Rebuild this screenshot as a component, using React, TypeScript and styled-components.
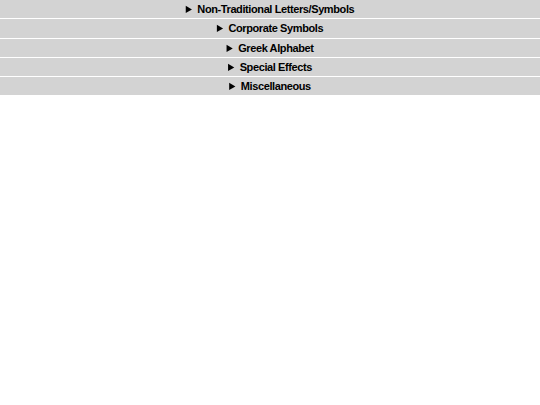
import React from "react";
import styled, { createGlobalStyle } from "styled-components";

const sections = [
  "Non-Traditional Letters/Symbols",
  "Corporate Symbols",
  "Greek Alphabet",
  "Special Effects",
  "Miscellaneous",
];

const GlobalStyle = createGlobalStyle`
  body {
    margin: 0;
    background: #ffffff;
    font-family: "Liberation Sans", Arial, sans-serif;
  }
`;

const Section = styled.details`
  margin-bottom: 1px;
`;

const Summary = styled.summary`
  height: 18.25px;
  line-height: 18px;
  background: #d3d3d3;
  color: #000;
  font-size: 11px;
  font-weight: bold;
  letter-spacing: -0.4px;
  text-align: center;
  cursor: pointer;
`;

const App: React.FC = () => {
  return (
    <>
      <GlobalStyle />
      {sections.map((title) => (
        <Section key={title}>
          <Summary>{title}</Summary>
        </Section>
      ))}
    </>
  );
};

export default App;
